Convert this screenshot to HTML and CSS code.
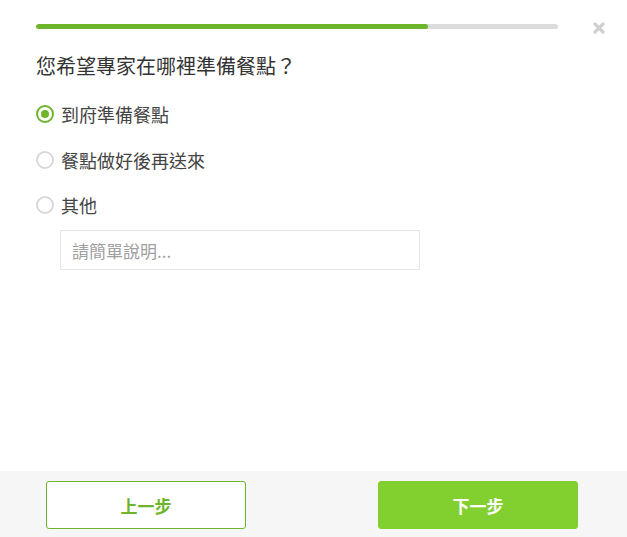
FILE: index.html
```html
<!DOCTYPE html>
<html lang="zh-Hant">
<head>
<meta charset="utf-8">
<link rel="stylesheet" href="styles.css">
</head>
<body>
<div class="modal">
  <div class="content">
    <div class="top">
      <div class="progress"><div class="fill" style="width:75%"></div></div>
      <svg class="close" width="12" height="12" viewBox="0 0 12 12"><path d="M2 2 L10 10 M10 2 L2 10" stroke="#d0d0d0" stroke-width="3.2" stroke-linecap="round"/></svg>
    </div>
    <h1 class="title">您希望專家在哪裡準備餐點？</h1>
    <div class="options">
      <label class="option"><span class="radio checked"></span><span>到府準備餐點</span></label>
      <label class="option"><span class="radio"></span><span>餐點做好後再送來</span></label>
      <label class="option"><span class="radio"></span><span>其他</span></label>
    </div>
    <input class="other" type="text" placeholder="請簡單說明...">
  </div>
  <div class="footer">
    <button class="btn prev">上一步</button>
    <button class="btn next">下一步</button>
  </div>
</div>
</body>
</html>
```
FILE: styles.css
```css
html, body {
  margin: 0;
  padding: 0;
  background: #fff;
  font-family: "Noto Sans CJK TC", "Noto Sans", sans-serif;
  color: #333;
}
.modal {
  width: 627px;
  height: 537px;
  display: flex;
  flex-direction: column;
}
.content {
  flex: 1;
  padding: 24px 22px 0 36px;
}
.top {
  display: flex;
  align-items: center;
  gap: 35px;
  height: 5px;
}
.progress {
  width: 522px;
  height: 5px;
  background: #dcdcdc;
  border-radius: 3px;
  overflow: hidden;
}
.fill {
  height: 100%;
  background: #6db52b;
  border-radius: 3px;
}
.close {
  display: block;
  margin-top: 2px;
}
.title {
  margin: 22px 0 0 0;
  font-size: 20px;
  font-weight: 400;
  line-height: 30px;
  color: #333;
}
.options {
  margin-top: 20px;
  display: flex;
  flex-direction: column;
  gap: 19.5px;
}
.option {
  display: flex;
  align-items: center;
  gap: 7px;
  font-size: 18px;
  line-height: 26px;
  color: #444;
}
.radio {
  width: 18px;
  height: 18px;
  box-sizing: border-box;
  border: 2px solid #d8d8d8;
  border-radius: 50%;
  display: flex;
  align-items: center;
  justify-content: center;
}
.radio.checked {
  border-color: #6db52b;
}
.radio.checked::after {
  content: "";
  width: 8px;
  height: 8px;
  border-radius: 50%;
  background: #6db52b;
}
.other {
  display: block;
  margin: 12px 0 0 24px;
  width: 360px;
  height: 40px;
  box-sizing: border-box;
  border: 1px solid #e6e6e6;
  padding: 0 11px;
  font-family: inherit;
  font-size: 17px;
  color: #444;
  outline: none;
}
.other::placeholder {
  color: #a0a0a0;
}
.footer {
  height: 66px;
  box-sizing: border-box;
  background: #f6f6f6;
  padding: 10px 0 0 46px;
  display: flex;
  gap: 132px;
}
.btn {
  width: 200px;
  height: 48px;
  box-sizing: border-box;
  border-radius: 3px;
  font-family: inherit;
  font-size: 17px;
  font-weight: 700;
  cursor: pointer;
}
.prev {
  background: #fff;
  border: 1px solid #6db52b;
  color: #6db52b;
}
.next {
  background: #82cf30;
  border: 1px solid #82cf30;
  color: #fff;
}
```
